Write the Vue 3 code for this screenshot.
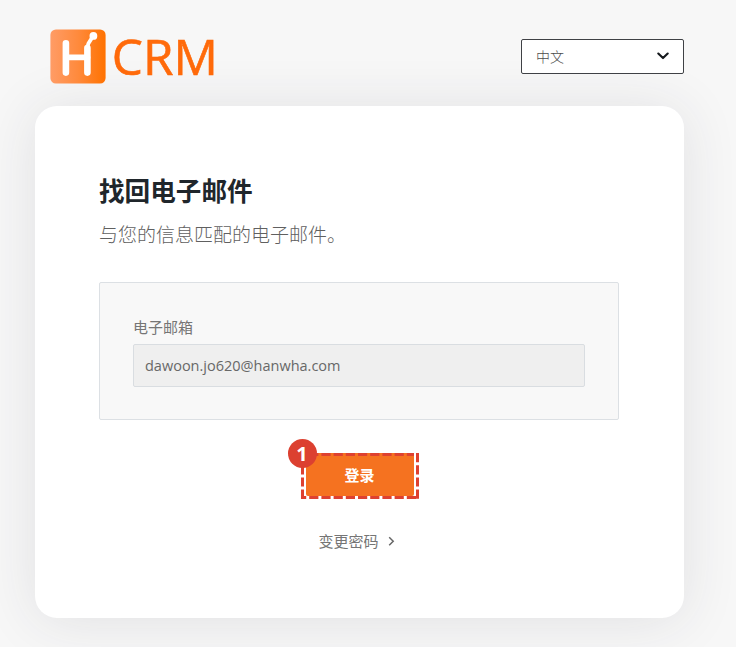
<script setup>
import { ref } from 'vue'

const language = ref('中文')
const email = ref('dawoon.jo620@hanwha.com')
</script>

<template>
  <div class="page">
    <header class="header">
      <div class="brand">
        <svg class="logo" width="56" height="55" viewBox="0 0 56 55">
          <defs>
            <linearGradient id="logo-fill" x1="0" x2="1" y1="0" y2="0">
              <stop offset="0" stop-color="#ff9c66" />
              <stop offset="0.5" stop-color="#ff8a3c" />
              <stop offset="1" stop-color="#ff7200" />
            </linearGradient>
          </defs>
          <rect x="0.4" y="0.4" width="55.2" height="54.2" rx="5.5" fill="url(#logo-fill)" />
          <g fill="none" stroke="#fff" stroke-width="6.6" stroke-linecap="round" stroke-linejoin="round">
            <path d="M15.9 14.3V43.6M37.4 19V43.6" />
            <path d="M15.9 28.4H37.4" stroke-width="5.8" />
            <path d="M37.2 19L38.4 14.5L42.5 8" stroke-width="3.8" />
          </g>
          <circle cx="43.4" cy="6.9" r="3.9" fill="#fff" />
        </svg>
        <svg class="wordmark" width="108" height="55" viewBox="0 0 108 55">
          <text x="0.8" y="45.8" textLength="106" lengthAdjust="spacingAndGlyphs">CRM</text>
        </svg>
      </div>
      <button class="select" type="button">
        <span>{{ language }}</span>
        <svg width="12" height="8" viewBox="0 0 12 8">
          <path d="M1.3 1.5L6 6.1L10.7 1.5" fill="none" stroke="#15191d" stroke-width="2.1" stroke-linecap="round" stroke-linejoin="round" />
        </svg>
      </button>
    </header>

    <main class="card">
      <h1>找回电子邮件</h1>
      <p class="subtitle">与您的信息匹配的电子邮件。</p>
      <section class="panel">
        <div class="label">电子邮箱</div>
        <div class="field">{{ email }}</div>
      </section>
      <div class="actions">
        <div class="callout">
          <button class="login" type="button">登录</button>
          <svg class="outline" width="118" height="46" viewBox="0 0 118 46">
            <path d="M1.5 3V44.5H116.5V0" fill="none" stroke="#fff" stroke-width="3" />
            <g fill="none" stroke="#de4130" stroke-width="3" stroke-dasharray="9.2 3">
              <path d="M0 1.5H113M0 44.5H118" stroke-dashoffset="4" />
              <path d="M116.5 0V46M1.5 0V46" />
            </g>
          </svg>
          <span class="badge">1</span>
        </div>
        <a class="change">
          <span>变更密码</span>
          <svg width="7" height="10" viewBox="0 0 7 10">
            <path d="M1.2 1.2L5.2 5.2L1.2 9.2" fill="none" stroke="#666" stroke-width="1.5" />
          </svg>
        </a>
      </div>
    </main>
  </div>
</template>

<style>
body {
  margin: 0;
  background: #f7f7f7;
}
</style>

<style scoped>
.page {
  box-sizing: border-box;
  width: 736px;
  height: 647px;
  padding: 29px 52px 0 35px;
  overflow: hidden;
  background: #f7f7f7;
  font-family: "Open Sans", "Noto Sans CJK SC", sans-serif;
  color: #757575;
}
.header {
  position: relative;
  z-index: 1;
  display: flex;
  justify-content: space-between;
  height: 77px;
  padding-left: 15px;
}
.brand {
  display: flex;
  height: 55px;
}
.logo,
.wordmark {
  display: block;
}
.wordmark {
  margin-left: 5px;
  overflow: visible;
}
.wordmark text {
  fill: #ff6a0a;
  stroke: #ff6a0a;
  stroke-width: 0.6px;
  font-family: "Open Sans", sans-serif;
  font-size: 49px;
}
.select {
  box-sizing: border-box;
  display: flex;
  align-items: center;
  justify-content: space-between;
  width: 163px;
  height: 35px;
  margin: 10px 0 0;
  padding: 0 14px 1px;
  border: 1px solid #3f4145;
  border-radius: 2px;
  background: #fff;
  color: #4c4c4c;
  font: 300 14px/20px "Noto Sans CJK SC", sans-serif;
}
.select span {
  margin-top: -1px;
}
.card {
  box-sizing: border-box;
  width: 649px;
  height: 512px;
  padding: 64px 65px 0 64px;
  border-radius: 22px;
  background: #fff;
  box-shadow: 0 3px 56px rgba(45, 50, 65, 0.11);
}
h1 {
  margin: 0;
  color: #20262b;
  font: 700 25.6px/40px "Noto Sans CJK SC", sans-serif;
}
.subtitle {
  margin: 8px 0 0;
  color: #606060;
  font: 300 19px/32px "Noto Sans CJK SC", sans-serif;
}
.panel {
  box-sizing: border-box;
  width: 520px;
  height: 138px;
  margin-top: 32px;
  padding: 33px;
  border: 1px solid #dce0e4;
  border-radius: 2px;
  background: #f8f8f8;
}
.label {
  font: 400 15px/22px "Noto Sans CJK SC", sans-serif;
}
.field {
  box-sizing: border-box;
  height: 43px;
  margin-top: 6px;
  padding: 0 11px;
  border: 1px solid #d9dde1;
  border-radius: 2px;
  background: #efefef;
  color: #686868;
  font-size: 14.5px;
  line-height: 41px;
}
.actions {
  display: flex;
  flex-direction: column;
  align-items: center;
  margin-top: 33px;
  padding-left: 1px;
}
.callout {
  position: relative;
  width: 118px;
  height: 46px;
}
.login {
  display: block;
  width: 108px;
  height: 43px;
  margin: 0 5px;
  padding: 0;
  border: 0;
  border-radius: 2px;
  background: #f57220;
  color: #fff;
  font: 700 15px/44px "Noto Sans CJK SC", sans-serif;
}
.outline {
  position: absolute;
  top: 0;
  left: 0;
}
.badge {
  position: absolute;
  top: -14px;
  left: -13px;
  width: 29px;
  height: 29px;
  border-radius: 50%;
  background: #dc4030;
  color: #fff;
  font: 700 20px/30px "Open Sans", sans-serif;
  text-align: center;
}
.change {
  display: flex;
  align-items: center;
  gap: 9px;
  margin-top: 31px;
  margin-right: 6px;
  font: 400 15px/22px "Noto Sans CJK SC", sans-serif;
}
</style>
